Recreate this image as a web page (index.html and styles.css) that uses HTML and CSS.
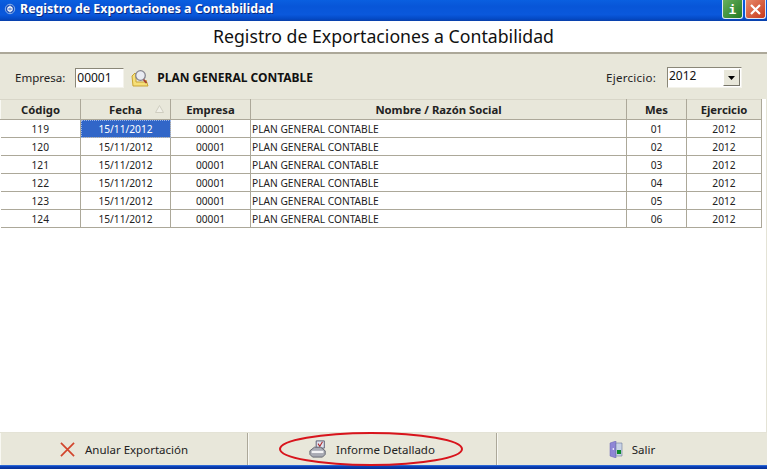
FILE: index.html
```html
<!DOCTYPE html>
<html lang="es">
<head>
<meta charset="utf-8">
<title>Registro de Exportaciones a Contabilidad</title>
<link rel="stylesheet" href="styles.css">
</head>
<body>
<div class="window">
  <header class="titlebar">
    <svg class="app-icon" width="12" height="12" viewBox="0 0 14 14"><circle cx="7" cy="7" r="5.5" fill="#1c4fb8" stroke="#9cc0f0"/><circle cx="7" cy="7" r="2.5" fill="none" stroke="#fff" stroke-width="1.4"/><path d="M7 3v8" stroke="#fff"/></svg>
    <span class="titlebar-text">Registro de Exportaciones a Contabilidad</span>
    <span class="win-btn win-info">i</span>
    <span class="win-btn win-close"><svg width="13" height="13" viewBox="0 0 13 13"><path d="M2 2l9 9M11 2l-9 9" stroke="#fff" stroke-width="2.2"/></svg></span>
  </header>
  <div class="heading">Registro de Exportaciones a Contabilidad</div>
  <div class="filters">
    <label class="lbl lbl-empresa">Empresa:</label>
    <span class="field field-empresa">00001</span>
    <svg class="search-icon" width="18" height="18" viewBox="0 0 18 18"><path d="M1 7l3-3 1 1v8h9l1-2 2 6H2z" fill="#f6df78" stroke="#c8a332"/><circle cx="9.500" cy="6.500" r="4.800" fill="#e9ebf2" stroke="#85858f" stroke-width="1.300"/><path d="M12.500 10.500l3 3.500" stroke="#a33c32" stroke-width="1.800"/></svg>
    <span class="company">PLAN GENERAL CONTABLE</span>
    <span class="spacer"></span>
    <label class="lbl lbl-year">Ejercicio:</label>
    <span class="combo"><span class="combo-value">2012</span><span class="combo-btn"><svg width="7" height="4" viewBox="0 0 7 4"><path d="M0 0h7L3.500 4z" fill="#000"/></svg></span></span>
  </div>
  <div class="grid">
    <table class="data">
      <colgroup>
        <col class="c-code"><col class="c-date"><col class="c-emp"><col class="c-name"><col class="c-mes"><col class="c-year">
      </colgroup>
      <thead>
        <tr>
          <th>Código</th>
          <th class="sorted">Fecha<svg class="sort" width="9" height="8" viewBox="0 0 9 8"><path d="M4.500 .5L8.500 7.500H.5z" fill="#f1f0e8" stroke="#cfcdc0"/></svg></th>
          <th>Empresa</th>
          <th>Nombre / Razón Social</th>
          <th>Mes</th>
          <th>Ejercicio</th>
        </tr>
      </thead>
      <tbody>
        <tr><td>119</td><td class="selected">15/11/2012</td><td>00001</td><td class="left">PLAN GENERAL CONTABLE</td><td>01</td><td>2012</td></tr>
        <tr><td>120</td><td>15/11/2012</td><td>00001</td><td class="left">PLAN GENERAL CONTABLE</td><td>02</td><td>2012</td></tr>
        <tr><td>121</td><td>15/11/2012</td><td>00001</td><td class="left">PLAN GENERAL CONTABLE</td><td>03</td><td>2012</td></tr>
        <tr><td>122</td><td>15/11/2012</td><td>00001</td><td class="left">PLAN GENERAL CONTABLE</td><td>04</td><td>2012</td></tr>
        <tr><td>123</td><td>15/11/2012</td><td>00001</td><td class="left">PLAN GENERAL CONTABLE</td><td>05</td><td>2012</td></tr>
        <tr><td>124</td><td>15/11/2012</td><td>00001</td><td class="left">PLAN GENERAL CONTABLE</td><td>06</td><td>2012</td></tr>
      </tbody>
    </table>
  </div>
  <footer class="actions">
    <div class="action">
      <svg class="act-x" width="17" height="15" viewBox="0 0 18 16"><path d="M2 1l14 14M16 1L2 15" stroke="#d2452c" stroke-width="1.800"/></svg>
      <span>Anular Exportación</span>
    </div>
    <div class="action">
      <svg width="18" height="18" viewBox="0 0 20 20"><path d="M8 1h9v8H8z" fill="#dfe3ee" stroke="#55556c"/><path d="M10 4l2 3 3-5" fill="none" stroke="#b02a2a" stroke-width="1.200"/><path d="M1 12l5-4h7l5 4v4l-3 3H4l-3-3z" fill="#a9abb4" stroke="#5f616b"/><path d="M3 12h13v2.500H3z" fill="#f4f4f6"/></svg>
      <span>Informe Detallado</span>
    </div>
    <div class="action">
      <svg width="14" height="17" viewBox="0 0 14 17"><path d="M1 2l6-2v17l-6-2z" fill="#8f86d6" stroke="#6a62b0" stroke-width=".5"/><path d="M7 2h6v13H7z" fill="#c9d3e6" stroke="#6d7a9a" stroke-width=".6"/><path d="M8 9h4v4H8z" fill="#0c8a2c"/><path d="M3 8l2-1v2z" fill="#fff"/></svg>
      <span>Salir</span>
    </div>
  </footer>
  <div class="bottom-edge"></div>
  <svg class="annotation" width="186" height="36" viewBox="0 0 186 36"><ellipse cx="93" cy="18" rx="91" ry="16" fill="none" stroke="#d8141c" stroke-width="2"/></svg>
</div>
</body>
</html>
```
FILE: styles.css
```css
* { box-sizing: border-box; }
html, body { margin: 0; padding: 0; }
body { width: 767px; height: 469px; overflow: hidden; font-family: "DejaVu Sans", sans-serif; color: #111; background: #fff; }
.window { position: relative; width: 767px; height: 469px; display: flex; flex-direction: column; }

.titlebar { height: 21px; flex: none; display: flex; align-items: flex-start; padding: 0 0 0 4px; background: linear-gradient(#0a5fe0 0, #0856d8 30%, #0a58dc 70%, #0449c4 90%, #0a3fa8 100%); }
.app-icon { flex: none; margin: 3px 4px 0 0; }
.titlebar-text { flex: 1; font: bold 12.400px/17px "Noto Sans", sans-serif; color: #fff; text-shadow: 1px 1px 0 #0a2a80; }
.win-btn { width: 21px; height: 19px; flex: none; display: flex; align-items: center; justify-content: center; border: 1px solid #dfe8f8; border-top: 0; border-radius: 0 0 3px 3px; }
.win-info { margin-right: 2px; background: linear-gradient(135deg, #66b05c, #237a22); color: #fff; font: bold 13px "DejaVu Sans Mono", monospace; }
.win-close { margin-right: 1px; background: linear-gradient(135deg, #e88a6a, #c8391c); }

.heading { height: 33px; flex: none; text-align: center; font: 17.700px/31px "Noto Sans", sans-serif; color: #111; border-bottom: 2px solid #aca899; }

.filters { height: 45px; flex: none; display: flex; align-items: center; background: #e8e7da; padding: 2px 25px 0 15px; font: 11.500px "Noto Sans", sans-serif; }
.lbl { color: #222; }
.lbl-empresa { margin-right: 10px; }
.lbl-year { letter-spacing: .25px; }
.field { display: block; width: 49px; height: 20px; background: #fff; padding: 1px 0 0 1px; border: 1px solid; border-color: #8a8778 #f4f3ec #f4f3ec #8a8778; font-size: 12px; line-height: 15px; }
.search-icon { margin: 0 0 0 7px; }
.company { margin-left: 8px; font-weight: 700; font-size: 12px; color: #111; }
.spacer { flex: 1; }
.combo { display: flex; width: 75px; height: 21px; margin-left: 11px; background: #fff; border: 1px solid; border-color: #8a8778 #f4f3ec #f4f3ec #8a8778; font-size: 12px; }
.combo-value { flex: 1; padding-left: 1px; line-height: 16px; }
.combo-btn { width: 17px; margin: 1px; display: flex; align-items: center; justify-content: center; background: #e8e7da; border: 1px solid; border-color: #fff #77756a #77756a #fff; }

.grid { flex: 1; background: #fff; border-right: 1px solid #e4e3d6; border-bottom: 1px solid #e4e3d6; min-height: 0; }
.data { border-collapse: collapse; table-layout: fixed; width: 761px; font: 10.200px "Noto Sans", sans-serif; }
.c-code { width: 80px; }
.c-date { width: 90px; }
.c-emp { width: 80px; }
.c-name { width: 376px; }
.c-mes { width: 60px; }
.c-year { width: 75px; }
.data th { height: 20px; padding: 0; background: #e8e7da; font-size: 11.300px; font-weight: 700; color: #222; border-right: 1px solid #aca899; border-bottom: 1px solid #aca899; border-left: 1px solid #f8f8f2; border-top: 1px solid #d8d6c8; }
.data th.sorted { position: relative; }
.sort { position: absolute; top: 5px; right: 6px; }
.data td { height: 18px; padding: 0; text-align: center; white-space: nowrap; border-right: 1px solid #aca899; border-bottom: 1px solid #aca899; color: #222; }
.data td.left { text-align: left; padding-left: 1px; }
.data td.selected { background: #3166c8; color: #fff; outline: 1px dotted #9ab4e8; outline-offset: -1px; }

.actions { height: 32px; flex: none; display: grid; grid-template-columns: 248px 249px 1fr; background: #e8e7da; font: 11.500px "Noto Sans", sans-serif; }
.action { display: flex; align-items: center; justify-content: center; gap: 9px; border-right: 1px solid #aca899; color: #222; box-shadow: inset 1px 0 0 #f8f8f2; }
.action:last-child { border-right: 0; }
.bottom-edge { height: 4px; flex: none; background: linear-gradient(#3a7ae0, #0a3fb8 40%, #062f90); }
.annotation { position: absolute; left: 278px; top: 431px; }
```
